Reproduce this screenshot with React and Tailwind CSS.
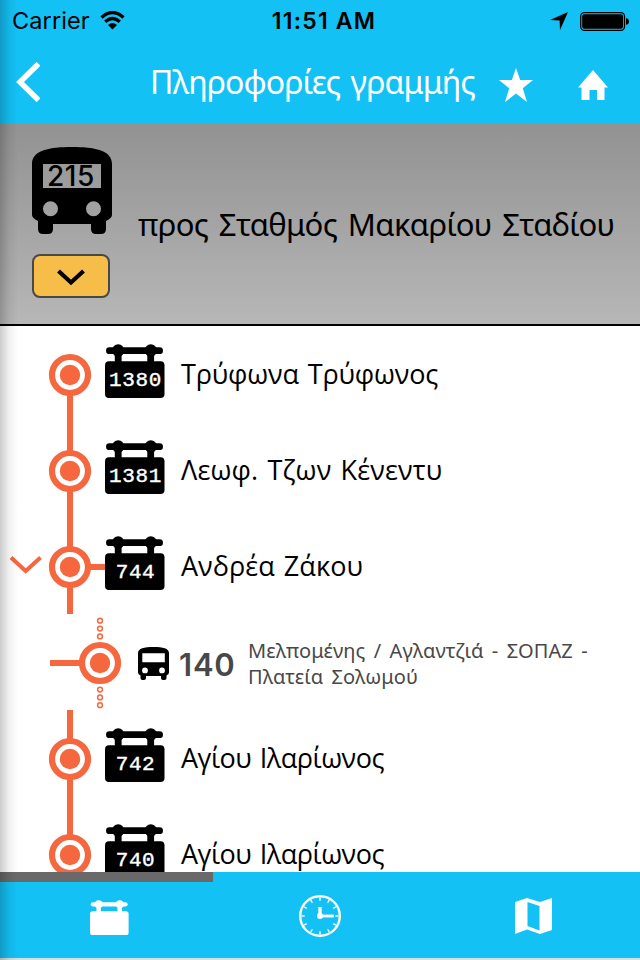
import React from "react";

const rows = [
  { type: "stop", code: "1380", name: "Τρύφωνα Τρύφωνος", spacing: "tracking-[-0.15px]", first: true },
  { type: "stop", code: "1381", name: "Λεωφ. Τζων Κένεντυ", spacing: "tracking-[0.15px]" },
  { type: "stop", code: "744", name: "Ανδρέα Ζάκου", spacing: "tracking-[0.05px]", open: true },
  { type: "line", code: "140", name: "Μελπομένης / Αγλαντζιά - ΣΟΠΑΖ - Πλατεία Σολωμού" },
  { type: "stop", code: "742", name: "Αγίου Ιλαρίωνος", spacing: "tracking-[-0.5px]" },
  { type: "stop", code: "740", name: "Αγίου Ιλαρίωνος", spacing: "tracking-[-0.5px]" },
];

function StopSign({ code, className }) {
  return (
    <svg viewBox="0 0 60 54" className={className} fill="currentColor">
      <rect x="1" y="3.3" width="57" height="6.8" rx="3.4" />
      <ellipse cx="13.2" cy="6.5" rx="6" ry="6.3" />
      <ellipse cx="45.8" cy="6.5" rx="6" ry="6.3" />
      <path d="M9.8 8h6.8v12H9.8zM42.3 8h6.8v12h-6.8z" />
      <rect x="0" y="17.3" width="59.5" height="36.7" rx="4" />
      {code && (
        <text
          x="30.5"
          y="41.5"
          textAnchor="middle"
          className="fill-white stroke-white stroke-[0.4px] font-['Liberation_Mono',monospace] text-[21px] tracking-[0.6px]"
        >
          {code}
        </text>
      )}
    </svg>
  );
}

function Marker({ cx }) {
  return (
    <>
      <circle cx={cx} cy="49" r="18" fill="white" stroke="currentColor" strokeWidth="6.2" />
      <circle cx={cx} cy="49" r="10.2" fill="currentColor" />
    </>
  );
}

function StopRow({ stop }) {
  return (
    <div className="flex h-24 shrink-0">
      <svg viewBox="0 0 105 96" className="h-24 w-[105px] shrink-0 text-[#f5683f]">
        <path
          d={stop.first ? "M70 49V96" : "M70 0V96"}
          stroke="currentColor"
          strokeWidth="6"
        />
        {stop.open && (
          <>
            <path d="M70 49H105" stroke="currentColor" strokeWidth="6" />
            <path d="M11 39.5L25.7 53L40.5 39.5" fill="none" stroke="currentColor" strokeWidth="4" />
          </>
        )}
        <Marker cx="70" />
      </svg>
      <StopSign code={stop.code} className="mt-[18px] h-[54px] w-[60px] shrink-0" />
      <p
        className={`ml-4 mt-7 whitespace-nowrap font-['Open_Sans',sans-serif] text-[27px] leading-10 [word-spacing:2px] ${stop.spacing}`}
      >
        {stop.name}
      </p>
    </div>
  );
}

function LineRow({ line }) {
  return (
    <div className="flex h-24 shrink-0">
      <svg viewBox="0 0 138 96" className="h-24 w-[138px] shrink-0 text-[#f5683f]">
        <path d="M50 49H100" stroke="currentColor" strokeWidth="6" />
        <Marker cx="100" />
        {[6.7, 14.6, 22.4, 75.6, 83.4, 91.2].map((y) => (
          <circle key={y} cx="100" cy={y} r="2.4" fill="none" stroke="currentColor" strokeWidth="1.5" />
        ))}
      </svg>
      <svg viewBox="0 0 31 33" className="mt-[33px] h-[33px] w-[31px] shrink-0">
        <path
          fillRule="evenodd"
          d="M0 6C0 1.5 6 0 15.5 0S31 1.5 31 6V25.5Q31 27.5 28.5 28.5V31Q28.5 33 26.5 33H25Q23 33 23 31V29H8V31Q8 33 6 33H4.5Q2.5 33 2.5 31V28.5Q0 27.5 0 25.5ZM4.3 6.3H26.8V15.3H4.3ZM7 20.5A2.9 2.9 0 1 0 7 26.3A2.9 2.9 0 1 0 7 20.5ZM24 20.5A2.9 2.9 0 1 0 24 26.3A2.9 2.9 0 1 0 24 20.5Z"
        />
      </svg>
      <p className="ml-2.5 mt-[31px] w-[69px] font-['Inter',sans-serif] text-[31px] font-semibold leading-10 tracking-[0.8px] text-[#484848]">
        {line.code}
      </p>
      <p className="mt-6 w-[360px] text-[20px] leading-[26px] tracking-[0.1px] text-[#484848] [word-spacing:3px]">
        {line.name}
      </p>
    </div>
  );
}

function StatusBar() {
  return (
    <div className="flex h-[42px] items-center px-3 font-['Inter',sans-serif] text-black">
      <div className="flex flex-1 items-center gap-2.5">
        <span className="text-[23.5px] tracking-[0.1px]">Carrier</span>
        <svg viewBox="0 0 25 19" className="mb-0.5 h-[19px] w-[25px]">
          <path d="M1.5 6.5Q12.5 -3.5 23.5 6.5" fill="none" stroke="currentColor" strokeWidth="3.4" />
          <path d="M5.2 10.8Q12.5 4.2 19.8 10.8" fill="none" stroke="currentColor" strokeWidth="3.2" />
          <path d="M8 14Q12.5 10.2 17 14L12.5 18.5Z" />
        </svg>
      </div>
      <span className="-mr-2 text-[23px] font-semibold tracking-[1.2px]">11:51 AM</span>
      <div className="flex flex-1 items-center justify-end">
        <svg viewBox="0 0 18 18" className="mr-3 h-[18px] w-[18px]">
          <path d="M18 0L10 18L9.6 8.4L0 8Z" />
        </svg>
        <svg viewBox="0 0 49 19" className="-mr-px h-[19px] w-[49px]">
          <rect x="0.7" y="0.7" width="43.8" height="17.6" rx="3.5" fill="none" stroke="currentColor" strokeWidth="1.3" />
          <rect x="2.2" y="2.2" width="40.8" height="14.6" rx="2" />
          <path d="M46 6.2Q49 6.5 49 9.5T46 12.8Z" />
        </svg>
      </div>
    </div>
  );
}

function ClockIcon() {
  return (
    <svg viewBox="-21 -21 42 42" className="h-[42px] w-[42px]" fill="none" stroke="currentColor">
      <circle r="19.8" strokeWidth="2.4" />
      {[0, 30, 60, 90, 120, 150, 180, 210, 240, 270, 300, 330].map((deg) => (
        <path key={deg} d="M0-18.5V-15.3" strokeWidth="1.4" transform={`rotate(${deg})`} />
      ))}
      <path d="M0 0V-9" strokeWidth="3.4" />
      <path d="M0 0H14" strokeWidth="2.8" />
      <circle r="3" fill="currentColor" stroke="none" />
    </svg>
  );
}

function App() {
  return (
    <div className="relative flex h-[960px] w-[640px] flex-col overflow-hidden bg-white font-['Noto_Sans',sans-serif] text-black">
      <header className="h-[124px] shrink-0 bg-[#14c1f5] text-white">
        <StatusBar />
        <div className="flex h-[82px]">
          <svg viewBox="0 0 24 40" className="ml-4 mt-5 h-10 w-6" fill="none">
            <path d="M22.5 1.8L4 20L22.5 38.2" stroke="currentColor" strokeWidth="5.5" />
          </svg>
          <h1 className="ml-[110px] mt-5 w-[349px] whitespace-nowrap text-[32px] leading-10 tracking-[-0.9px] [word-spacing:3px]">
            Πληροφορίες γραμμής
          </h1>
          <svg viewBox="0 0 34 34" className="mt-[26px] h-[34px] w-[34px]" fill="currentColor">
            <path d="M17 0L21.2 12H34L23.8 20.2L28 34L17 25.5L6 34L10.2 20.2L0 12H12.8Z" />
          </svg>
          <svg viewBox="0 0 30 30" className="ml-[45px] mt-7 h-[30px] w-[30px]" fill="currentColor">
            <path d="M15 0L30 17.5H26.5V30H19V20H11.5V30H3.5V17.5H0Z" />
          </svg>
        </div>
      </header>

      {/* Route heading */}
      <section className="flex h-[202px] shrink-0 border-b-2 border-black bg-linear-to-b from-[#929292] to-[#b7b7b7] pl-8">
        <div className="w-[106px] shrink-0 pt-[23px]">
          <svg viewBox="0 0 80 87" className="h-[87px] w-20">
            <path
              fillRule="evenodd"
              d="M0 17C0 3 18 0 40 0S80 3 80 17V68Q80 71 74 74V82Q74 87 69 87H64Q59 87 59 82V77H21V82Q21 87 16 87H11Q6 87 6 82V74Q0 71 0 68ZM11 17V41H69V17ZM18.5 54.3A7.5 7.5 0 1 0 18.5 69.3A7.5 7.5 0 1 0 18.5 54.3ZM61.5 54.3A7.5 7.5 0 1 0 61.5 69.3A7.5 7.5 0 1 0 61.5 54.3Z"
            />
            <text
              x="39"
              y="39"
              textAnchor="middle"
              className="font-['Inter',sans-serif] text-[28px] font-medium tracking-[0.6px]"
            >
              215
            </text>
          </svg>
          <button className="mt-5 flex h-11 w-[78px] items-center justify-center rounded-lg border-2 border-[#484848] bg-[#f7bd49]">
            <svg viewBox="0 0 28 17" className="mt-0.5 h-[17px] w-7" fill="none">
              <path d="M1.5 2L14 13.5L26.5 2" stroke="currentColor" strokeWidth="4.2" />
            </svg>
          </button>
        </div>
        <h2 className="mt-20 whitespace-nowrap text-[31px] leading-10 tracking-[-0.6px] [word-spacing:3px]">
          προς Σταθμός Μακαρίου Σταδίου
        </h2>
      </section>

      <main className="flex h-[546px] shrink-0 flex-col overflow-hidden">
        {rows.map((row) =>
          row.type === "stop" ? (
            <StopRow key={row.code} stop={row} />
          ) : (
            <LineRow key={row.code} line={row} />
          )
        )}
      </main>

      <nav className="h-[88px] shrink-0 border-b-2 border-[#d8dde0] bg-[#14c1f5] text-white">
        <div className="h-2.5 w-[213px] bg-[#696969]" />
        <div className="flex h-[68px]">
          <button className="flex w-[213px] items-center justify-center pl-1.5">
            <StopSign className="mt-0.5 h-[35px] w-[39px]" />
          </button>
          <button className="flex w-[214px] items-center justify-center">
            <ClockIcon />
          </button>
          <button className="flex w-[213px] items-center justify-center">
            <svg viewBox="0 0 37 36" className="h-9 w-[37px]" fill="currentColor">
              <path
                fillRule="evenodd"
                d="M0 4L12 0L25 4L37 0V32L25 36L12 31.5L0 36ZM12.5 4V28L24.5 32.5V8Z"
              />
            </svg>
          </button>
        </div>
      </nav>

      {/* Drawer shadow along the left edge */}
      <div className="pointer-events-none absolute inset-y-0 left-0 w-[18px] bg-linear-to-r from-black/20 via-black/6 to-transparent" />
    </div>
  );
}

export default App;
